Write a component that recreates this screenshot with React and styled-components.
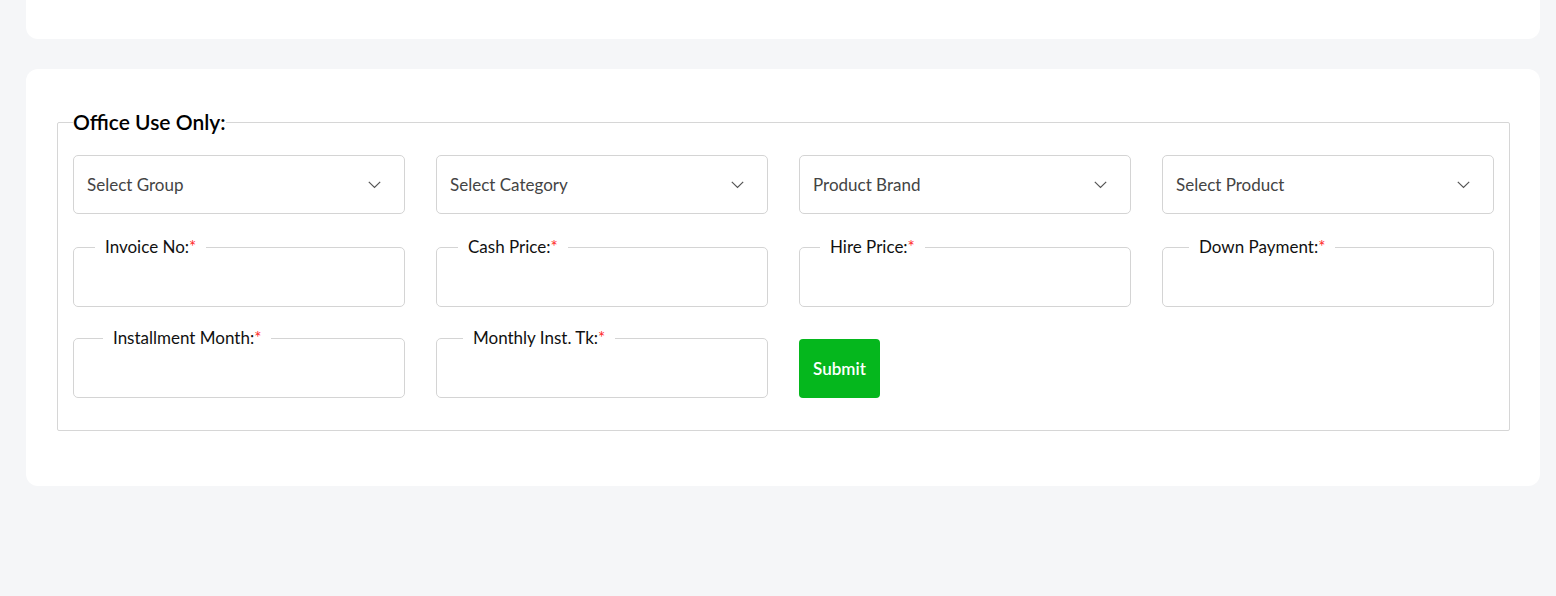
import React from "react";
import styled, { createGlobalStyle } from "styled-components";

const GlobalStyle = createGlobalStyle`
  body {
    margin: 0;
    background: #f5f6f8;
    font-family: Lato, "Open Sans", sans-serif;
    color: #111;
  }
`;

const Page = styled.div`
  padding: 0 16px 0 26px;
  height: 596px;
  overflow: hidden;
  display: flex;
  flex-direction: column;
  gap: 30px;
`;

const TopCard = styled.div`
  height: 39px;
  background: #fff;
  border-radius: 0 0 12px 12px;
`;

const Card = styled.div`
  background: #fff;
  border-radius: 12px;
  padding: 41px 30px 55px 31px;
`;

const Group = styled.fieldset`
  margin: 0;
  border: 1px solid #d6d6d6;
  border-radius: 2px;
  padding: 21px 15px 32px;
`;

const GroupTitle = styled.legend`
  margin-left: 0;
  padding: 0;
  font-size: 21px;
  line-height: 24px;
  font-weight: 600;
  color: #000;
`;

const Grid = styled.div`
  display: grid;
  grid-template-columns: repeat(4, 1fr);
  column-gap: 31px;
  row-gap: 21px;
  align-items: end;
`;

const SelectBox = styled.div`
  height: 59px;
  margin-bottom: 2px;
  box-sizing: border-box;
  border: 1px solid #d4d4d4;
  border-radius: 5px;
  display: flex;
  align-items: center;
  justify-content: space-between;
  padding: 0 23px 0 13px;
  font-size: 17px;
  color: #444;
`;

const Field = styled.fieldset`
  margin: 0;
  padding: 0;
  border: 1px solid #d4d4d4;
  border-radius: 5px;
  min-width: 0;
`;

const FieldLabel = styled.legend`
  margin-left: ${(p) => p.$indent}px;
  padding: 0 10px;
  font-size: 17px;
  line-height: 20px;
  color: #111;
`;

const Star = styled.span`
  color: #ff2a2a;
`;

const FieldInput = styled.input`
  display: block;
  width: 100%;
  box-sizing: border-box;
  height: 49px;
  border: none;
  outline: none;
  background: transparent;
  padding: 0 14px;
  font: inherit;
`;

const SubmitButton = styled.button`
  justify-self: start;
  width: 81px;
  height: 59px;
  border: none;
  border-radius: 4px;
  background: #05b71d;
  color: #fff;
  font-family: inherit;
  font-size: 17px;
  font-weight: 600;
  cursor: pointer;
`;

const Chevron = () => (
  <svg width="13" height="8" viewBox="0 0 13 8" fill="none">
    <polyline points="0.8,0.8 6.5,6.5 12.2,0.8" stroke="#555" strokeWidth="1.2" />
  </svg>
);

const selects = ["Select Group", "Select Category", "Product Brand", "Select Product"];

const fields = [
  { label: "Invoice No:", indent: 21 },
  { label: "Cash Price:", indent: 21 },
  { label: "Hire Price:", indent: 20 },
  { label: "Down Payment:", indent: 26 },
  { label: "Installment Month:", indent: 29 },
  { label: "Monthly Inst. Tk:", indent: 26 },
];

const InputField = ({ label, indent }) => (
  <Field>
    <FieldLabel $indent={indent}>
      {label}
      <Star>*</Star>
    </FieldLabel>
    <FieldInput type="text" />
  </Field>
);

const App = () => {
  return (
    <>
      <GlobalStyle />
      <Page>
        <TopCard />
        <Card>
          <Group>
            <GroupTitle>Office Use Only:</GroupTitle>
            <Grid>
              {selects.map((s) => (
                <SelectBox key={s}>
                  <span>{s}</span>
                  <Chevron />
                </SelectBox>
              ))}
              {fields.map((f) => (
                <InputField key={f.label} {...f} />
              ))}
              <SubmitButton>Submit</SubmitButton>
            </Grid>
          </Group>
        </Card>
      </Page>
    </>
  );
};

export default App;
